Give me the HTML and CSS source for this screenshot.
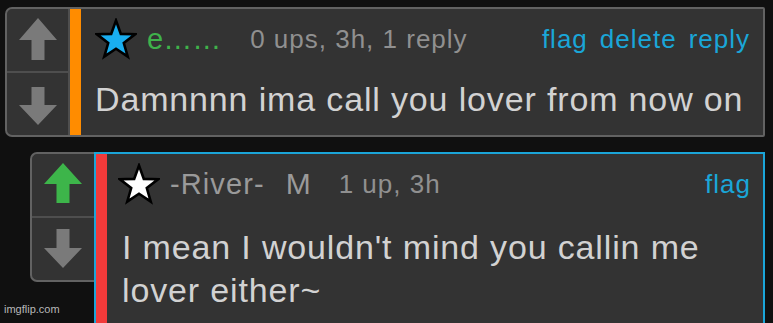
FILE: index.html
```html
<!DOCTYPE html>
<html>
<head>
<meta charset="utf-8">
<link rel="stylesheet" href="styles.css">
</head>
<body>
<div class="thread">
  <div class="comment c1">
    <div class="votes">
      <div class="vote">
        <svg width="38" height="42" viewBox="0 0 38 42"><polygon points="19,0 38,22 25.5,22 25.5,42 12.5,42 12.5,22 0,22" fill="#7a7a7a"/></svg>
      </div>
      <div class="vote">
        <svg width="38" height="38" viewBox="0 0 38 38"><polygon points="12.5,0 25.5,0 25.5,18 38,18 19,38 0,18 12.5,18" fill="#7a7a7a"/></svg>
      </div>
    </div>
    <div class="bar orange"></div>
    <div class="content">
      <div class="head">
        <svg class="star" width="42" height="42" viewBox="0 0 42 42"><polygon points="21,2.5 25.82,15.87 40.02,16.32 28.8,25.03 32.76,38.68 21,30.7 9.24,38.68 13.2,25.03 1.98,16.32 16.18,15.87" fill="#19aef0" stroke="#000" stroke-width="2.6" stroke-linejoin="miter"/></svg>
        <span class="name green">e……</span>
        <span class="meta">0 ups, 3h, 1 reply</span>
        <span class="links"><span>flag</span><span>delete</span><span>reply</span></span>
      </div>
      <div class="text">Damnnnn ima call you lover from now on</div>
    </div>
  </div>

  <div class="comment c2">
    <div class="votes">
      <div class="vote">
        <svg width="38" height="40" viewBox="0 0 38 40"><polygon points="19,0 38,21 25.5,21 25.5,40 12.5,40 12.5,21 0,21" fill="#3db54a"/></svg>
      </div>
      <div class="vote">
        <svg width="38" height="39" viewBox="0 0 38 39"><polygon points="12.5,0 25.5,0 25.5,19 38,19 19,39 0,19 12.5,19" fill="#7a7a7a"/></svg>
      </div>
    </div>
    <div class="box">
      <div class="bar red"></div>
      <div class="content">
        <div class="head">
          <svg class="star" width="42" height="43" viewBox="0 0 42 43"><polygon points="21,2.5 25.82,15.87 40.02,16.32 28.8,25.03 32.76,38.68 21,30.7 9.24,38.68 13.2,25.03 1.98,16.32 16.18,15.87" fill="#fff" stroke="#000" stroke-width="2.6"/></svg>
          <span class="name river">-River-</span>
          <span class="gender">M</span>
          <span class="meta">1 up, 3h</span>
          <span class="links"><span>flag</span></span>
        </div>
        <div class="text">I mean I wouldn't mind you callin me<br>lover either~</div>
      </div>
    </div>
  </div>
</div>
<div class="watermark">imgflip.com</div>
</body>
</html>
```

FILE: styles.css
```css
html, body {
  margin: 0;
  padding: 0;
  background: #101010;
  width: 773px;
  height: 323px;
  overflow: hidden;
  font-family: "Liberation Sans", Arial, sans-serif;
}

.thread {
  padding: 7px 8px 0 5px;
}

.comment {
  display: flex;
}

.c1 {
  height: 130px;
  box-sizing: border-box;
  border: 2px solid #626262;
  border-radius: 7px 2px 2px 7px;
  background: #333;
}

.votes {
  display: flex;
  flex-direction: column;
  width: 63px;
  flex: none;
  box-sizing: border-box;
}

.c1 .votes {
  border-right: 2px solid #4e4e4e;
}

.vote {
  flex: 1;
  display: flex;
  align-items: center;
  justify-content: center;
}

.vote + .vote {
  border-top: 2px solid #4e4e4e;
}

.c1 .vote:first-child svg {
  margin-top: -2px;
}

.c1 .vote:last-child svg {
  margin-top: 4px;
}

.bar {
  width: 11px;
  flex: none;
}

.orange { background: #ff8c00; }
.red { background: #f23a3a; }

.content {
  flex: 1;
  min-width: 0;
}

.head {
  display: flex;
  align-items: center;
  height: 44px;
  font-size: 26px;
  letter-spacing: 1px;
  color: #909090;
}

.c1 .content {
  padding: 8px 13px 0 14px;
}

.star {
  flex: none;
  margin-right: 10px;
}

.name {
  font-size: 29px;
  color: #9a9a9a;
}

.green {
  color: #3fb24b;
  letter-spacing: 0;
  margin-right: 29px;
}

.river {
  letter-spacing: 1.1px;
}

.gender {
  font-size: 30px;
  letter-spacing: 1px;
  color: #9a9a9a;
  margin-left: 21px;
  margin-right: 27px;
}

.links {
  margin-left: auto;
  display: flex;
  gap: 12px;
  color: #1aa6d8;
}

.text {
  color: #d2d2d2;
  font-size: 34px;
  letter-spacing: 0.85px;
  line-height: 43px;
}

.c1 .text {
  margin-top: 17px;
}

/* second comment */
.c2 {
  margin-top: 15px;
  margin-left: 25px;
  align-items: flex-start;
}

.c2 .votes {
  width: 64px;
  height: 130px;
  border: 2px solid #626262;
  border-right: none;
  border-radius: 7px 0 0 7px;
  background: #333;
}

.c2 .vote:first-child svg {
  margin-top: -4px;
}

.c2 .vote:last-child svg {
  margin-top: -2px;
}

.box {
  flex: 1;
  display: flex;
  height: 200px;
  border: 2px solid #1ba5d8;
  border-bottom: none;
  background: #333;
}

.c2 .content {
  padding: 8px 12px 0 11px;
}

.c2 .text {
  margin-top: 20px;
  padding-left: 4px;
}

.watermark {
  position: absolute;
  left: 4px;
  top: 303px;
  font-size: 11px;
  color: #b8b8b8;
}
```
